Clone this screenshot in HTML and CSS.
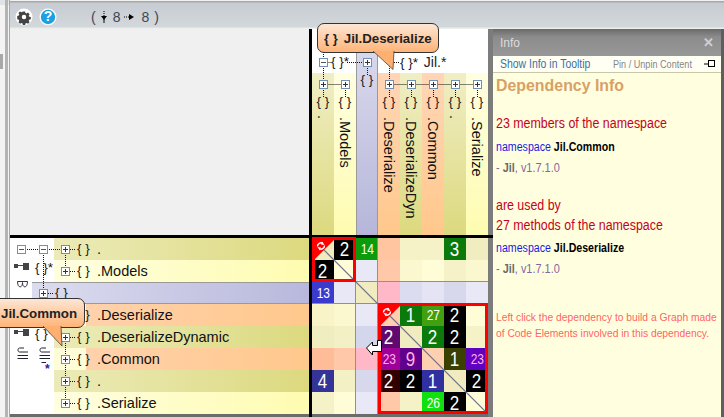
FILE: index.html
```html
<!DOCTYPE html>
<html lang="en">
<head>
<meta charset="utf-8">
<title>Dependency Matrix</title>
<link rel="stylesheet" href="styles.css">
</head>
<body>
<div class="app">
  <aside class="rail"><span class="rail-tab"></span></aside>
  <div class="workspace">
    <header class="toolbar">
      <svg class="tool-icon" width="18" height="18" viewBox="0 0 18 18"><circle cx="9" cy="9" r="8.5" fill="#fff"/><path fill="#444" fill-rule="evenodd" d="M7.6 2h2.8l.4 2 1.4.6 1.8-1.1 2 2-1.1 1.8.6 1.4 2 .4v2.8l-2 .4-.6 1.4 1.1 1.8-2 2-1.8-1.1-1.4.6-.4 2H7.600l-.4-2-1.400-.6-1.800 1.100-2-2 1.100-1.800-.6-1.400-2-.4V7.600l2-.4.6-1.400-1.100-1.800 2-2 1.800 1.100 1.400-.6zM9 6.200a2.800 2.800 0 1 0 0 5.600 2.800 2.800 0 0 0 0-5.600z" transform="translate(1.800 1.800) scale(.8)"/></svg>
      <svg class="tool-icon help" width="18" height="18" viewBox="0 0 18 18"><circle cx="9" cy="9" r="8.500" fill="#fff"/><circle cx="9" cy="9" r="7.200" fill="#1e9fe0"/></svg>
      <span class="help-mark">?</span>
      <span class="counts">
        <span>(</span>
        <svg width="8" height="12" viewBox="0 0 8 12"><path d="M4 0v5" stroke="#000" stroke-dasharray="1 1"/><path d="M1 5h6L4 9z" fill="#000"/><path d="M4 8v4" stroke="#000"/></svg>
        <span>8</span>
        <svg width="11" height="8" viewBox="0 0 11 8"><path d="M0 4h5" stroke="#000" stroke-dasharray="1 1"/><path d="M5 1v6l5-3z" fill="#000"/></svg>
        <span>8</span>
        <span>)</span>
      </span>
    </header>
    <div class="stage">
      <div class="corner"></div>
      <div class="col-head">
        <svg class="links" width="176" height="206" viewBox="0 0 176 206">
          <path class="dots" d="M11.500 23V68M33.500 55V68M55.500 33V46M77.500 23V68M99.500 55V68M121.500 55V68M143.500 55V68M165.500 55V68M11.500 55.500H33M77.500 55.500H165M11.500 33.500H19M35 33.500H55M78 33.500H88"/>
        </svg>
        <div class="top-node top-minus"><span class="box minus"></span></div>
        <span class="brace star top-star-a">{ }<i>*</i></span>
        <span class="brace star top-star-b">{ }<i>*</i> <b>Jil.*</b></span>
        <div class="cols">
          <div class="col olive"><span class="box plus"></span><span class="brace">{ }</span><span class="vlabel dot-only">.</span></div>
          <div class="col pale"><span class="box plus"></span><span class="brace">{ }</span><span class="vlabel">.Models</span></div>
          <div class="col lav"><span class="box plus"></span><span class="brace">{ }</span></div>
          <div class="col orange"><span class="box plus"></span><span class="brace">{ }</span><span class="vlabel">.Deserialize</span></div>
          <div class="col olive"><span class="box plus"></span><span class="brace">{ }</span><span class="vlabel">.DeserializeDyn</span></div>
          <div class="col orange"><span class="box plus"></span><span class="brace">{ }</span><span class="vlabel">.Common</span></div>
          <div class="col olive"><span class="box plus"></span><span class="brace">{ }</span><span class="vlabel dot-only">.</span></div>
          <div class="col pale"><span class="box plus"></span><span class="brace">{ }</span><span class="vlabel">.Serialize</span></div>
        </div>
      </div>
      <div class="side-top"></div>
      <div class="hbar"></div>
      <div class="row-head">
        <div class="row olive-r"><span class="box plus"></span><span class="brace">{ }</span><span class="rlabel dot-only">.</span></div>
        <div class="row pale-r"><span class="box plus"></span><span class="brace">{ }</span><span class="rlabel">.Models</span></div>
        <div class="row lav-r"><span class="box plus"></span><span class="brace">{ }</span></div>
        <div class="row orange-r"><span class="box plus"></span><span class="brace">{ }</span><span class="rlabel">.Deserialize</span></div>
        <div class="row olive-r"><span class="box plus"></span><span class="brace">{ }</span><span class="rlabel">.DeserializeDynamic</span></div>
        <div class="row orange-r"><span class="box plus"></span><span class="brace">{ }</span><span class="rlabel">.Common</span></div>
        <div class="row olive-r"><span class="box plus"></span><span class="brace">{ }</span><span class="rlabel dot-only">.</span></div>
        <div class="row pale-r"><span class="box plus"></span><span class="brace">{ }</span><span class="rlabel">.Serialize</span></div>
        <svg class="links" width="299" height="176" viewBox="0 0 299 176">
          <path class="dots" d="M11 11.500H55M33.500 11V55M55.500 11V33M55.500 99V165M60 11.500H66M60 33.500H66M38 55.500H44M60 99.500H66M60 121.500H66M60 143.500H66M60 165.500H66"/>
          <g fill="#444"><rect x="4" y="26" width="4" height="4"/><rect x="13" y="25" width="6" height="7"/><path d="M8 27.500h5" stroke="#444"/><rect x="4" y="92" width="4" height="4"/><rect x="13" y="91" width="6" height="7"/><path d="M8 93.500h5" stroke="#444"/></g>
          <path d="M7.500 43.500h10M7.500 43.500c0 7 5 7 5 1 0 6 5 6 5-1" fill="none" stroke="#334"/>
          <path d="M14 110h-4.500c-2 0-2 4 0 4H18M7.500 117.500H18M7.500 120.500H18" fill="none" stroke="#223"/>
          <path d="M36 110h-4.500c-2 0-2 4 0 4H40M29.500 117.500H40M29.500 120.500H40M31.500 124.500H36" fill="none" stroke="#223"/>
        </svg>
        <span class="box minus tree-minus-a"></span>
        <span class="box minus tree-minus-b"></span>
        <span class="brace star side-star-a">{ }<i>*</i></span>
        <span class="brace star side-star-b">{ }<i>*</i></span>
        <span class="side-asterisk">*</span>
      </div>
      <div class="matrix">
        <div class="grid">
          <span class="cell diag-y"></span><span class="cell k"><b>2</b></span><span class="cell g1 sm"><b>14</b></span><span class="cell o1"></span><span class="cell y2"></span><span class="cell y2"></span><span class="cell g2"><b>3</b></span><span class="cell y3"></span>
          <span class="cell k"><b>2</b></span><span class="cell y1"></span><span class="cell l1"></span><span class="cell o2"></span><span class="cell y4"></span><span class="cell y1"></span><span class="cell y2"></span><span class="cell y4"></span>
          <span class="cell b1 sm"><b>13</b></span><span class="cell l1"></span><span class="cell diag-y"></span><span class="cell p1"></span><span class="cell l2"></span><span class="cell l3"></span><span class="cell l4"></span><span class="cell l1"></span>
          <span class="cell y5"></span><span class="cell y4"></span><span class="cell l1"></span><span class="cell o3"></span><span class="cell g2"><b>1</b></span><span class="cell g3 sm"><b>27</b></span><span class="cell k"><b>2</b></span><span class="cell y1"></span>
          <span class="cell y3"></span><span class="cell y6"></span><span class="cell l5"></span><span class="cell v1"><b>2</b></span><span class="cell diag-y"></span><span class="cell g2"><b>2</b></span><span class="cell k"><b>2</b></span><span class="cell y2"></span>
          <span class="cell o4"></span><span class="cell o2"></span><span class="cell p1"></span><span class="cell v2 sm pink"><b>23</b></span><span class="cell v3 pink"><b>9</b></span><span class="cell o3"></span><span class="cell d1"><b>1</b></span><span class="cell v4 sm pink"><b>23</b></span>
          <span class="cell b2"><b>4</b></span><span class="cell y6"></span><span class="cell l4"></span><span class="cell r1"><b>2</b></span><span class="cell k"><b>2</b></span><span class="cell b3"><b>1</b></span><span class="cell diag-y"></span><span class="cell k"><b>2</b></span>
          <span class="cell y2"></span><span class="cell y1"></span><span class="cell l1"></span><span class="cell o2"></span><span class="cell y2"></span><span class="cell g4 sm"><b>26</b></span><span class="cell k"><b>2</b></span><span class="cell y1"></span>
        </div>
        <span class="vline vline-a"></span><span class="vline vline-b"></span><span class="hline hline-a"></span><span class="hline hline-b"></span>
        <svg class="links" width="176" height="176" viewBox="0 0 176 176"><path d="M0 0L176 176" stroke="#70708c" stroke-width="1.200"/></svg>
        <div class="cycle cycle-a">
          <svg class="corner-mark" width="19" height="19" viewBox="0 0 19 19"><path d="M0 0h19L0 19z" fill="#f00"/><path d="M2.500 6.500a3.500 3.500 0 0 1 5.500-3M9.500 5.500a3.500 3.500 0 0 1-5.500 3" fill="none" stroke="#fff" stroke-width="1.400"/><path d="M7 1.500l2.500 3.500-3.500-.5zM5 10.500L2.500 7l3.500.5z" fill="#fff"/></svg>
        </div>
        <div class="cycle cycle-b">
          <svg class="corner-mark" width="19" height="19" viewBox="0 0 19 19"><path d="M0 0h19L0 19z" fill="#f00"/><path d="M2.500 6.500a3.500 3.500 0 0 1 5.500-3M9.500 5.500a3.500 3.500 0 0 1-5.500 3" fill="none" stroke="#fff" stroke-width="1.400"/><path d="M7 1.500l2.500 3.500-3.500-.5zM5 10.500L2.500 7l3.500.5z" fill="#fff"/></svg>
        </div>
        <svg class="pointer" width="16" height="16" viewBox="0 0 16 16"><path d="M.5 8l6-6v3.500h5V.5h4v11h-9V15z" fill="#fff" stroke="#000"/></svg>
      </div>
      <div class="side-bottom"></div>
      <div class="foot foot-a"></div>
      <div class="foot foot-b"></div>
      <div class="foot foot-c"></div>
    </div>
  </div>
  <section class="info">
    <div class="info-title"><span>Info</span><span class="close">✕</span></div>
    <div class="info-tools">
      <span class="tip-link">Show Info in Tooltip</span>
      <span class="pin-link">Pin / Unpin Content</span>
      <svg width="11" height="8" viewBox="0 0 11 8"><path d="M0 4h4" stroke="#000"/><rect x="4.500" y=".5" width="6" height="6" fill="none" stroke="#000"/></svg>
    </div>
    <div class="info-body">
      <h1>Dependency Info</h1>
      <p class="big first">23 members of the namespace</p>
      <p class="ns"><span>namespace</span> <b>Jil.Common</b></p>
      <p class="asm">- <b>Jil</b>, <span>v1.7.1.0</span></p>
      <p class="big gap">are used by</p>
      <p class="big second">27 methods of the namespace</p>
      <p class="ns ns-b"><span>namespace</span> <b>Jil.Deserialize</b></p>
      <p class="asm">- <b>Jil</b>, <span>v1.7.1.0</span></p>
      <p class="hint">Left click the dependency to build a Graph made of Code Elements involved in this dependency.</p>
    </div>
  </section>
  <div class="tip tip-a"><span class="tip-brace">{ }</span>Jil.Deserialize
    <svg class="tip-arrow" width="24" height="20" viewBox="0 0 24 20"><path d="M0 0L20 18.500L21 0z" fill="#ffb070"/><path d="M0 0L20 18.500L21 0" fill="none" stroke="#444" stroke-width=".8"/></svg>
  </div>
  <div class="tip tip-b">Jil.Common
    <svg class="tip-arrow" width="24" height="22" viewBox="0 0 24 22"><path d="M0 0L19 20L18 0z" fill="#ffb070"/><path d="M0 0L19 20L18 0" fill="none" stroke="#444" stroke-width=".8"/></svg>
  </div>
</div>
</body>
</html>
```

FILE: styles.css
```css
* { box-sizing: border-box; }
html, body { margin: 0; padding: 0; }
body { width: 724px; height: 417px; overflow: hidden; font-family: "Liberation Sans", Arial, sans-serif; background: #f0f0f0; }
.app { position: relative; display: flex; width: 724px; height: 417px; overflow: hidden; }

.rail { position: relative; width: 10px; flex: none; background: linear-gradient(to bottom, #dfe3e6 0, #dfe3e6 5px, #f4f4f4 5px); border-right: 1px solid #a8a8a8; }
.rail::after { content: ""; position: absolute; left: 5px; top: 0; bottom: 0; width: 3px; background: #b4b4b4; }
.rail-tab { position: absolute; left: 0; top: 54px; width: 3px; height: 15px; background: #a8a8a8; }

.workspace { width: 483px; flex: none; display: flex; flex-direction: column; }
.toolbar { position: relative; height: 29px; width: 714px; flex: none; display: flex; align-items: center; padding: 3px 0 0 5px; border-top: 1px solid #f0f0f0; background: linear-gradient(to bottom, #a8a8a8 0, #a8a8a8 1px, #c6ccd2 2px, #d2d8da 26px, #eceeee 27px); }
.tool-icon { flex: none; }
.help { margin-left: 6px; }
.help-mark { position: absolute; left: 33px; top: 7px; width: 10px; text-align: center; color: #fff; font-weight: bold; font-size: 14px; line-height: 16px; }
.counts { display: flex; align-items: center; margin-left: 34px; font-size: 14px; color: #445; }
.counts svg:nth-of-type(1) { margin-left: 4px; margin-right: 5px; }
.counts svg:nth-of-type(2) { margin-left: 4px; margin-right: 6px; }
.counts span:last-child { margin-left: 5px; }

.stage { flex: 1; display: grid; grid-template-columns: 299px 3px 176px 5px; grid-template-rows: 206px 3px 176px 3px; background: #000; }
.corner { grid-column: 1; grid-row: 1; background: #f0f0f0; }
.col-head { grid-column: 3; grid-row: 1; position: relative; background: #fff; }
.side-top { grid-column: 4; grid-row: 1; background: #7c7c7c; }
.hbar { grid-column: 1 / 5; grid-row: 2; background: #000; }
.row-head { grid-column: 1; grid-row: 3; position: relative; background: #fff; display: flex; flex-direction: column; }
.matrix { grid-column: 3; grid-row: 3; position: relative; }
.side-bottom { grid-column: 4; grid-row: 3 / 5; background: #7c7c7c; }
.foot { background: #6c6c6c; grid-row: 4; }
.foot-a { grid-column: 1; }
.foot-b { grid-column: 2; background: #000; }
.foot-c { grid-column: 3; }

.links { position: absolute; left: 0; top: 0; z-index: 1; pointer-events: none; }
.dots { fill: none; stroke: #111; stroke-dasharray: 1 1; }

.box { position: relative; z-index: 2; display: block; flex: none; width: 9px; height: 9px; border: 1px solid #6f90b4; background: #fff linear-gradient(#666, #666) center / 5px 1px no-repeat; }
.plus { background-image: linear-gradient(#333, #333), linear-gradient(#333, #333); background-position: center, center; background-size: 5px 1px, 1px 5px; background-repeat: no-repeat; }
.minus { background-image: linear-gradient(#555, #555); }

.brace { position: relative; z-index: 2; display: block; flex: none; font-size: 13.500px; line-height: 14px; color: #222; white-space: nowrap; }
.star i { font-style: normal; color: #112; margin-left: 0; }
.star b { font-weight: normal; color: #222; font-size: 14px; margin-left: 2px; }

.cols { position: absolute; left: 0; top: 0; right: 0; bottom: 0; display: flex; align-items: flex-end; }
.col { position: relative; display: flex; flex-direction: column; align-items: center; width: 22px; height: 162px; padding-top: 7px; }
.col .brace { margin-top: 6px; }
.col.lav { height: 183px; padding-top: 6px; border-left: 1px solid #9a9a9a; border-right: 1px solid #9a9a9a; }
.col.lav .brace { margin-top: 6px; }
.olive { background: linear-gradient(to bottom, #f0eec4, #dcd97f); }
.pale { background: linear-gradient(to bottom, #fffee0, #fefcb0); }
.lav { background: linear-gradient(to bottom, #d8d8ec, #b6b6da); }
.orange { background: linear-gradient(to bottom, #ffd6b6, #ffc88c); }
.vlabel { writing-mode: vertical-rl; font-size: 14.500px; line-height: 20px; color: #111; margin-top: 8px; white-space: nowrap; }
.vlabel.dot-only { margin-top: 6px; }
.top-node { position: absolute; z-index: 2; }
.top-minus { left: 7px; top: 29px; }
.top-star-a { position: absolute; left: 19px; top: 26px; z-index: 2; }
.top-star-b { position: absolute; left: 88px; top: 26px; z-index: 2; }

.row { position: relative; display: flex; align-items: center; height: 22px; margin-left: 44px; padding-left: 7px; }
.row .brace { margin-left: 7px; width: 13px; }
.rlabel { margin-left: 7px; font-size: 14.500px; color: #111; white-space: nowrap; }
.lav-r { margin-left: 22px; background: linear-gradient(to right, #dcdcf0, #b8b8dc); border-top: 1px solid #9a9a9a; border-bottom: 1px solid #9a9a9a; }
.olive-r { background: linear-gradient(to right, #ecebb8, #dcd97f); }
.pale-r { background: linear-gradient(to right, #fffee0, #fefcb0); }
.orange-r { background: linear-gradient(to right, #fffcd8 0, #fffcd8 32px, #ffd2ac 32px, #ffc88c 100%); }
.tree-minus-a { position: absolute; left: 7px; top: 7px; }
.tree-minus-b { position: absolute; left: 29px; top: 7px; }
.side-star-a { position: absolute; left: 25px; top: 23px; }
.side-star-b { position: absolute; left: 25px; top: 89px; }
.side-asterisk { position: absolute; left: 35px; top: 125px; font-size: 12px; font-weight: bold; color: #22a; line-height: 12px; }

.grid { display: grid; grid-template-columns: repeat(8, 22px); grid-auto-rows: 22px; }
.cell { display: flex; align-items: center; justify-content: center; font-size: 20px; line-height: 22px; color: #fff; }
.cell b { display: block; font-weight: normal; transform: scaleX(.85); }
.sm { font-size: 15px; }
.sm b { transform: scaleX(.8); }
.pink { color: #ffb0e8; }
.k { background: #000; } .g1 { background: #0a9c0a; } .g2 { background: #0a7a0a; } .g3 { background: #40a010; } .g4 { background: #10e010; }
.b1 { background: #3a3acc; } .b2 { background: #343498; } .b3 { background: #3030a0; }
.v1 { background: #600a70; } .v2 { background: #a0009a; } .v3 { background: #60008c; } .v4 { background: #6000c0; }
.r1 { background: #300000; } .d1 { background: #3a4000; }
.y1 { background: #fffdd8; } .y2 { background: #f5f2c8; } .y3 { background: #f0eec0; } .y4 { background: #fbf8d0; } .y5 { background: #f8f4c8; } .y6 { background: #f2f0c4; }
.o1 { background: #ffc4a0; } .o2 { background: #ffc8a8; } .o3 { background: #ffd0b0; } .o4 { background: #ffbc98; }
.l1 { background: #e8e8f6; } .l2 { background: #dcdcf0; } .l3 { background: #e4e4f4; } .l4 { background: #d8d8ec; } .l5 { background: #d4d6ec; }
.p1 { background: #ffb8c8; }
.diag-y { background: #f0ecc0; }
.vline { position: absolute; top: 0; bottom: 0; width: 1px; background: #909090; }
.vline-a { left: 43px; } .vline-b { left: 65px; }
.hline { position: absolute; left: 0; right: 0; height: 1px; background: #909090; }
.hline-a { top: 43px; } .hline-b { top: 65px; }
.cycle { position: absolute; z-index: 2; border: 3px solid #f00; }
.cycle-a { left: 0; top: -1px; width: 44px; height: 45px; }
.cycle-b { left: 66px; top: 65px; width: 110px; height: 111px; }
.corner-mark { position: absolute; left: 0; top: 0; }
.pointer { position: absolute; left: 54px; top: 102px; z-index: 3; }

.info { flex: 1; min-width: 0; display: flex; flex-direction: column; margin-top: 29px; background: #ffffe0; border-right: 3px solid #5e5e5e; }
.info-title { position: relative; height: 27px; flex: none; display: flex; align-items: center; justify-content: space-between; padding: 0 7px; color: #dcdcdc; font-size: 12px; background: linear-gradient(to bottom, #6a6a6a, #8c8c8c 30%, #989898); }
.close { font-size: 13px; font-weight: bold; color: #d0d0d0; }
.info-tools { display: flex; align-items: center; height: 17px; flex: none; padding: 0 0 0 7px; background: #fffff4; border-bottom: 1px solid #c8c8a8; white-space: nowrap; }
.tip-link { font-size: 12px; color: #3a72a4; width: 113px; flex: none; transform: scaleX(.87); transform-origin: left; }
.pin-link { font-size: 10px; color: #868686; width: 91px; flex: none; transform: scaleX(.91); transform-origin: left; }
.info-body { padding: 0 0 0 3px; }
.info-body h1 { margin: 3px 0 0; font-size: 17px; line-height: 20px; font-weight: bold; color: #d9a066; white-space: nowrap; transform: scaleX(.935); transform-origin: left; }
.info-body p { margin: 0; white-space: nowrap; transform-origin: left; }
.big { font-size: 14px; line-height: 20px; color: #c80020; transform: scaleX(.886); }
.first { margin-top: 17px !important; }
.gap { margin-top: 16px !important; }
.second { margin-top: 0 !important; }
.ns { font-size: 12px; line-height: 21px; margin-top: 4px !important; transform: scaleX(.885); }
.ns-b { margin-top: 3px !important; }
.ns span { color: #1a1ae0; }
.ns b { color: #000; }
.asm { font-size: 12px; line-height: 21px; color: #8268a0; transform: scaleX(.91); }
.asm b { color: #6a6a6a; }
.info-body .hint { margin-top: 29px; font-size: 11.700px; line-height: 16px; color: #ff6464; width: 257px; white-space: normal; transform: scaleX(.88); }

.tip { position: absolute; z-index: 5; height: 30px; display: flex; align-items: center; border: 1px solid #333; border-radius: 7px; font-size: 13.300px; font-weight: bold; color: #222; white-space: nowrap; background: linear-gradient(to bottom, #fde6d4, #ffb478); }
.tip-brace { margin-right: 6px; margin-left: 6px; font-size: 13px; }
.tip-a { left: 317px; top: 23px; width: 122px; }
.tip-b { left: -12px; top: 298px; width: 97px; padding-left: 12px; }
.tip-arrow { position: absolute; top: 27px; }
.tip-a .tip-arrow { left: 55px; }
.tip-b .tip-arrow { left: 54px; }
```
